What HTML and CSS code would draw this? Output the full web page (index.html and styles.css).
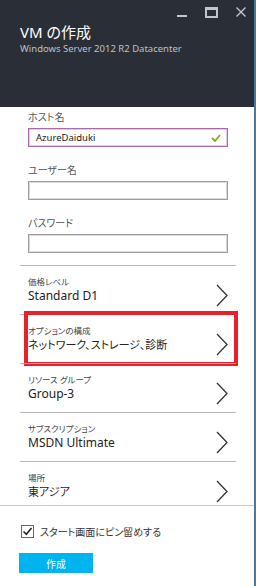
FILE: index.html
```html
<!DOCTYPE html>
<html lang="ja">
<head>
    <meta charset="UTF-8">
    <meta name="viewport" content="width=device-width, initial-scale=1.0">
    <title>VM の作成</title>
    <link rel="stylesheet" href="styles.css">
</head>
<body>
    <div class="blade">
        <div class="header">
            <div class="controls">
                <span class="ctl-min"></span>
                <span class="ctl-max"></span>
                <svg class="ctl-close" width="10" height="10" viewBox="0 0 10 10">
                    <path d="M0.5 0.5 L9.5 9.5 M9.5 0.5 L0.5 9.5" stroke="#c3c7cd" stroke-width="1.4" fill="none"/>
                </svg>
            </div>
            <h1 class="title">VM の作成</h1>
            <p class="subtitle">Windows Server 2012 R2 Datacenter</p>
        </div>

        <div class="form">
            <div class="field">
                <label>ホスト名</label>
                <div class="input valid">
                    <span>AzureDaiduki</span>
                    <svg width="10" height="8" viewBox="0 0 10 8">
                        <path d="M1 4 L4 7 L9 1" stroke="#6fb227" stroke-width="1.8" fill="none"/>
                    </svg>
                </div>
            </div>
            <div class="field">
                <label>ユーザー名</label>
                <div class="input"></div>
            </div>
            <div class="field">
                <label>パスワード</label>
                <div class="input"></div>
            </div>
        </div>

        <div class="rows">
            <div class="row">
                <div class="row-text">
                    <div class="row-label">価格レベル</div>
                    <div class="row-value">Standard D1</div>
                </div>
                <svg class="chevron" width="12" height="23" viewBox="0 0 12 23"><path d="M1 1 L11 11.5 L1 22" stroke="#333" stroke-width="1.3" fill="none"/></svg>
            </div>
            <div class="row marked">
                <div class="row-text">
                    <div class="row-label">オプションの構成</div>
                    <div class="row-value ja">ネットワーク、ストレージ、診断</div>
                </div>
                <svg class="chevron" width="12" height="23" viewBox="0 0 12 23"><path d="M1 1 L11 11.5 L1 22" stroke="#333" stroke-width="1.3" fill="none"/></svg>
            </div>
            <div class="row">
                <div class="row-text">
                    <div class="row-label">リソース グループ</div>
                    <div class="row-value">Group-3</div>
                </div>
                <svg class="chevron" width="12" height="23" viewBox="0 0 12 23"><path d="M1 1 L11 11.5 L1 22" stroke="#333" stroke-width="1.3" fill="none"/></svg>
            </div>
            <div class="row">
                <div class="row-text">
                    <div class="row-label">サブスクリプション</div>
                    <div class="row-value">MSDN Ultimate</div>
                </div>
                <svg class="chevron" width="12" height="23" viewBox="0 0 12 23"><path d="M1 1 L11 11.5 L1 22" stroke="#333" stroke-width="1.3" fill="none"/></svg>
            </div>
            <div class="row">
                <div class="row-text">
                    <div class="row-label">場所</div>
                    <div class="row-value ja">東アジア</div>
                </div>
                <svg class="chevron" width="12" height="23" viewBox="0 0 12 23"><path d="M1 1 L11 11.5 L1 22" stroke="#333" stroke-width="1.3" fill="none"/></svg>
            </div>
        </div>

        <div class="footer">
            <div class="pin">
                <span class="checkbox">
                    <svg width="11" height="11" viewBox="0 0 11 11"><path d="M1.5 5.5 L4.3 8.3 L9.5 2" stroke="#222" stroke-width="1.6" fill="none"/></svg>
                </span>
                <span>スタート画面にピン留めする</span>
            </div>
            <button class="create">作成</button>
        </div>
    </div>
</body>
</html>
```

FILE: styles.css
```css
body {
    margin: 0;
    font-family: "Noto Sans", "Noto Sans CJK JP", sans-serif;
    font-feature-settings: "palt";
    background: #fff;
    color: #222;
}
.blade {
    width: 254px;
    height: 586px;
    border-right: 2px solid #4b789e;
    background: #fff;
}
.header {
    height: 107px;
    background: #2a2e36;
    box-sizing: border-box;
    padding: 0 0 0 20px;
}
.controls {
    height: 20px;
    display: flex;
    justify-content: flex-end;
    align-items: flex-start;
    padding-right: 8px;
}
.ctl-min {
    width: 10px;
    height: 2px;
    background: #c3c7cd;
    margin: 15px 18px 0 0;
}
.ctl-max {
    width: 9px;
    height: 6px;
    border: 2px solid #c3c7cd;
    border-top-width: 3px;
    margin: 7px 18px 0 0;
}
.ctl-close {
    margin-top: 7px;
}
.title {
    margin: 2px 0 0;
    font-size: 15px;
    line-height: 20px;
    font-weight: normal;
    color: #fff;
}
.subtitle {
    margin: 0;
    font-size: 9.5px;
    line-height: 13px;
    color: #bcc1c9;
}
.form {
    padding: 3px 26px 12px 28px;
    display: flex;
    flex-direction: column;
    gap: 16px;
}
.field label {
    display: block;
    font-size: 10px;
    line-height: 14px;
    color: #555;
    margin-bottom: 4px;
}
.input {
    height: 19px;
    box-sizing: border-box;
    border: 1px solid #9c9c9c;
    box-shadow: inset 0 0 0 1px #dcdcdc;
    display: flex;
    align-items: center;
    justify-content: space-between;
    padding: 0 6px 0 7px;
    font-size: 9.5px;
    color: #222;
}
.input.valid {
    border-color: #a96aab;
    box-shadow: inset 0 0 0 1px #e4cbe5;
}
.rows {
    margin: 0 18px 0 20px;
}
.row {
    position: relative;
    height: 49px;
    box-sizing: border-box;
    border-top: 1px solid #b9b9b9;
    display: flex;
    justify-content: space-between;
    align-items: flex-start;
    padding: 10px 8px 0 8px;
}
.row:last-child {
    height: 44px;
}
.row-label {
    font-size: 8.5px;
    line-height: 12px;
    color: #444;
}
.row-value {
    font-size: 12px;
    line-height: 16px;
    color: #222;
}
.row-value.ja {
    font-size: 11px;
}
.chevron {
    margin-top: 8px;
}
.marked::after {
    content: "";
    position: absolute;
    left: 4px;
    right: -2px;
    top: -4px;
    bottom: -3px;
    border: 4px solid #e8202a;
}
.footer {
    border-top: 1px solid #c8c8c8;
    padding: 18px 0 0 19px;
}
.pin {
    display: flex;
    align-items: center;
    gap: 6px;
    font-size: 10px;
    color: #333;
    margin-left: 2px;
}
.checkbox {
    width: 13px;
    height: 13px;
    box-sizing: border-box;
    border: 1px solid #666;
    display: flex;
    align-items: center;
    justify-content: center;
}
.create {
    margin-top: 14px;
    width: 74px;
    height: 20px;
    border: none;
    background: #00b4f0;
    color: #fff;
    font-family: "Noto Sans CJK JP", sans-serif;
    font-size: 10px;
    padding: 0;
}
```
